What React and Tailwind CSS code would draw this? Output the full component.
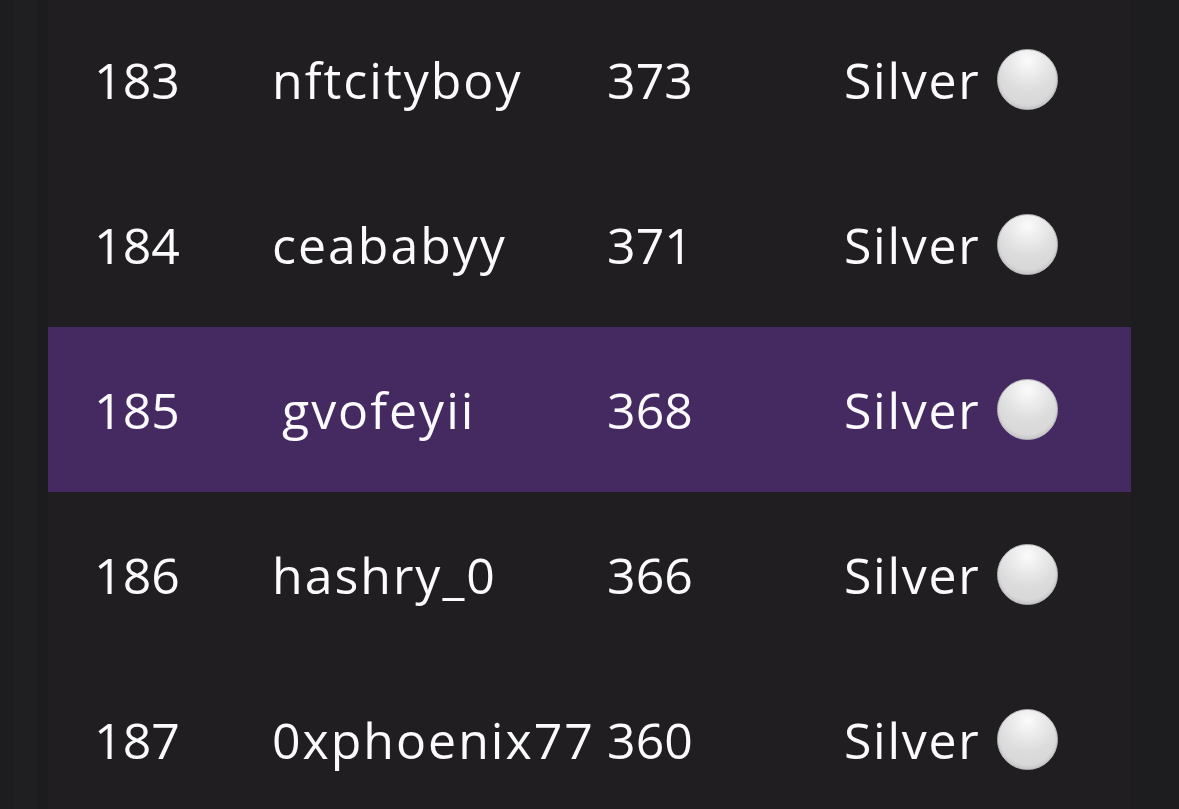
import React from "react";

const rows = [
  { rank: "183", name: "nftcityboy", score: "373" },
  { rank: "184", name: "ceababyy", score: "371" },
  { rank: "185", name: "gvofeyii", score: "368", hl: true, indent: true },
  { rank: "186", name: "hashry_0", score: "366" },
  { rank: "187", name: "0xphoenix77", score: "360" },
];

function Circle() {
  return (
    <div
      className="w-[61px] h-[61px] rounded-full border border-[#b9b9bd] shrink-0"
      style={{
        background:
          "radial-gradient(circle at 50% 18%, #fbfbfb 0%, #ececec 25%, #dcdcdc 55%, #d4d4d6 100%)",
        boxShadow: "inset 0 -2px 3px rgba(0,0,0,0.08)",
      }}
    />
  );
}

export default function App() {
  return (
    <div
      className="w-[1179px] h-[809px] overflow-hidden bg-[#1c1b1e] flex"
      style={{ fontFamily: '"Open Sans", "Noto Sans", sans-serif' }}
    >
      <div className="w-[13px] bg-[#1d1c1f]" />
      <div className="w-[24px] bg-[#1f1e21]" />
      <div className="w-[11px] bg-[#1c1b1e]" />
      <div className="w-[1083px] bg-[#201e21] flex flex-col -mt-[3px]">
        {rows.map((r) => (
          <div
            key={r.rank}
            className={`h-[165px] shrink-0 flex items-center text-[#fbfafc] text-[50px] leading-none ${
              r.hl ? "bg-[#452a62]" : ""
            }`}
          >
            <div className="w-[178px] text-center">{r.rank}</div>
            <div className="w-[46px]" />
            <div className="w-[330px] whitespace-nowrap overflow-visible tracking-[2px]">
              <span className={r.indent ? "ml-[10px]" : ""}>{r.name}</span>
            </div>
            <div className="w-[96px] flex justify-center">
              <span>{r.score}</span>
            </div>
            <div className="w-[146px]" />
            <div className="flex items-center gap-[17px]">
              <span className="tracking-[1.7px]">Silver</span>
              <Circle />
            </div>
          </div>
        ))}
      </div>
      <div className="w-[48px] bg-[#1d1c1f]" />
    </div>
  );
}
